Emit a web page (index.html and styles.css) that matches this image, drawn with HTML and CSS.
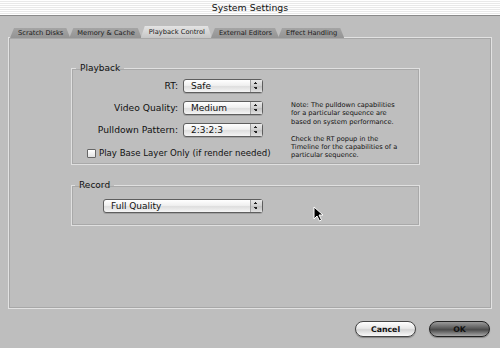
FILE: index.html
```html
<!DOCTYPE html>
<html lang="en">
<head>
  <meta charset="UTF-8" />
  <title>System Settings</title>
  <link rel="stylesheet" href="styles.css">
</head>
<body>
  <div class="titlebar">System Settings</div>

  <div class="content">
    <div class="tabs">
      <div class="tab">Scratch Disks</div>
      <div class="tab">Memory &amp; Cache</div>
      <div class="tab active">Playback Control</div>
      <div class="tab">External Editors</div>
      <div class="tab">Effect Handling</div>
    </div>

    <div class="pane">
      <fieldset class="group playback">
        <legend>Playback</legend>
        <div class="playback-grid">
          <label class="field-label">RT:</label>
          <div class="popup"><span>Safe</span><i class="arrows"></i></div>

          <label class="field-label">Video Quality:</label>
          <div class="popup"><span>Medium</span><i class="arrows"></i></div>

          <label class="field-label">Pulldown Pattern:</label>
          <div class="popup"><span>2:3:2:3</span><i class="arrows"></i></div>

          <div class="note">
            <p>Note: The pulldown capabilities<br>for a particular sequence are<br>based on system performance.</p>
            <p>Check the RT popup in the<br>Timeline for the capabilities of a<br>particular sequence.</p>
          </div>

          <div class="check-row">
            <span class="checkbox"></span>
            <span>Play Base Layer Only (if render needed)</span>
          </div>
        </div>
      </fieldset>

      <fieldset class="group record">
        <legend>Record</legend>
        <div class="record-body">
          <div class="popup wide"><span>Full Quality</span><i class="arrows"></i></div>
        </div>
      </fieldset>

      <svg class="cursor" width="11" height="16" viewBox="0 0 11 16">
        <path d="M1 1 L1 13 L4 10 L6.5 15 L8.5 14 L6 9 L10 9 Z" fill="#000" stroke="#fff" stroke-width="1"/>
      </svg>
    </div>

    <div class="actions">
      <button class="btn">Cancel</button>
      <button class="btn default">OK</button>
    </div>
  </div>
</body>
</html>
```

FILE: styles.css
```css
body {
  margin: 0;
  width: 500px;
  height: 348px;
  overflow: hidden;
  background: #bebebe;
  font-family: "DejaVu Sans", "Liberation Sans", sans-serif;
  color: #111;
}

.titlebar {
  height: 15px;
  line-height: 16px;
  text-align: center;
  font-size: 9.4px;
  color: #111;
  background: repeating-linear-gradient(#ffffff 0, #ffffff 1px, #e9e9e9 1px, #e9e9e9 2px);
  border-bottom: 1px solid #8a8a8a;
}

.content {
  padding: 10px 8px 0 8px;
}

/* tabs */
.tabs {
  display: flex;
  align-items: flex-end;
  height: 12px;
  padding-left: 2px;
  position: relative;
  z-index: 1;
}
.tab {
  height: 10px;
  line-height: 11px;
  padding: 0 7px 0 8px;
  margin-right: -1px;
  font-size: 6.7px;
  color: #1a1a1a;
  background: linear-gradient(#a4a4a4, #949494);
  clip-path: polygon(4px 0, calc(100% - 4px) 0, 100% 100%, 0 100%);
}
.tab.active {
  height: 12px;
  line-height: 12px;
  background: linear-gradient(#e4e4e4, #c6c6c6);
}

/* tab pane */
.pane {
  position: relative;
  margin-top: -1px;
  height: 272px;
  box-sizing: border-box;
  border: 1px solid #e2e2e2;
  box-shadow: inset 0 0 0 1px #a8a8a8;
  padding: 25px 0 0 62px;
}

.group {
  margin: 0;
  padding: 0;
  width: 349px;
  box-sizing: border-box;
  border: 1px solid #e0e0e0;
  box-shadow: inset 0 0 0 1px #a9a9a9;
  min-inline-size: 0;
}
.group legend {
  margin-left: 4px;
  padding: 0 4px;
  font-size: 9px;
  line-height: 10px;
}
.record {
  margin-top: 15px;
}
.record legend {
  margin-left: 3px;
}

.playback-grid {
  display: grid;
  grid-template-columns: 106px 80px 1fr;
  grid-template-rows: 14px 14px 14px 16px;
  column-gap: 5px;
  row-gap: 8px;
  padding: 6px 0 3px 0;
}
.field-label {
  grid-column: 1;
  text-align: right;
  font-size: 9.2px;
  line-height: 14px;
  white-space: nowrap;
}
.playback-grid .popup {
  grid-column: 2;
}

.popup {
  display: flex;
  height: 14px;
  box-sizing: border-box;
  border: 1px solid #5e5e5e;
  border-radius: 3px;
  background: linear-gradient(#ffffff, #f0f0f0 45%, #dedede 55%, #f5f5f5);
  box-shadow: 0 1px 0 rgba(0, 0, 0, 0.15);
  font-size: 9px;
  line-height: 12px;
}
.popup span {
  flex: 1;
  padding-left: 7px;
}
.popup .arrows {
  width: 11px;
  border-left: 1px solid #a0a0a0;
  background:
    linear-gradient(to top right, transparent 50%, #222 50%) no-repeat,
    linear-gradient(to top left, transparent 50%, #222 50%) no-repeat,
    linear-gradient(to bottom right, transparent 50%, #222 50%) no-repeat,
    linear-gradient(to bottom left, transparent 50%, #222 50%) no-repeat,
    linear-gradient(#e8e8e8, #cfcfcf 50%, #c2c2c2 51%, #e0e0e0);
  background-size: 2px 2px, 2px 2px, 2px 2px, 2px 2px, 100% 100%;
  background-position: 3px 7px, 5px 7px, 3px 2px, 5px 2px, 0 0;
}
.popup.wide {
  width: 160px;
}

.note {
  grid-column: 3;
  grid-row: 2 / span 3;
  margin-left: 23px;
  font-size: 6.6px;
  line-height: 8.4px;
  white-space: nowrap;
}
.note p {
  margin: 0 0 8.4px 0;
}

.check-row {
  grid-column: 1 / span 2;
  grid-row: 4;
  display: flex;
  align-items: center;
  gap: 3px;
  padding-left: 15px;
  font-size: 8.6px;
  white-space: nowrap;
}
.checkbox {
  flex: none;
  width: 9px;
  height: 9px;
  box-sizing: border-box;
  border: 1px solid #666;
  border-radius: 1px;
  background: linear-gradient(#ffffff, #e2e2e2);
}

.record-body {
  padding: 9px 0 12px 31px;
}

.cursor {
  position: absolute;
  left: 304px;
  top: 168px;
}

/* buttons */
.actions {
  display: flex;
  justify-content: flex-end;
  gap: 13px;
  margin-top: 12px;
  padding-right: 2px;
}
.btn {
  width: 61px;
  height: 16px;
  padding: 0;
  border: 1px solid #444;
  border-radius: 8px;
  font-family: "DejaVu Sans", sans-serif;
  font-weight: bold;
  font-size: 7.8px;
  color: #111;
  background: linear-gradient(#ffffff, #e8e8e8 45%, #d4d4d4 55%, #fafafa);
  box-shadow: 0 1px 1px rgba(0, 0, 0, 0.3);
}
.btn.default {
  background: linear-gradient(#9a9a9a, #5a5a5a 45%, #4a4a4a 55%, #a8a8a8);
  border-color: #222;
}
```
